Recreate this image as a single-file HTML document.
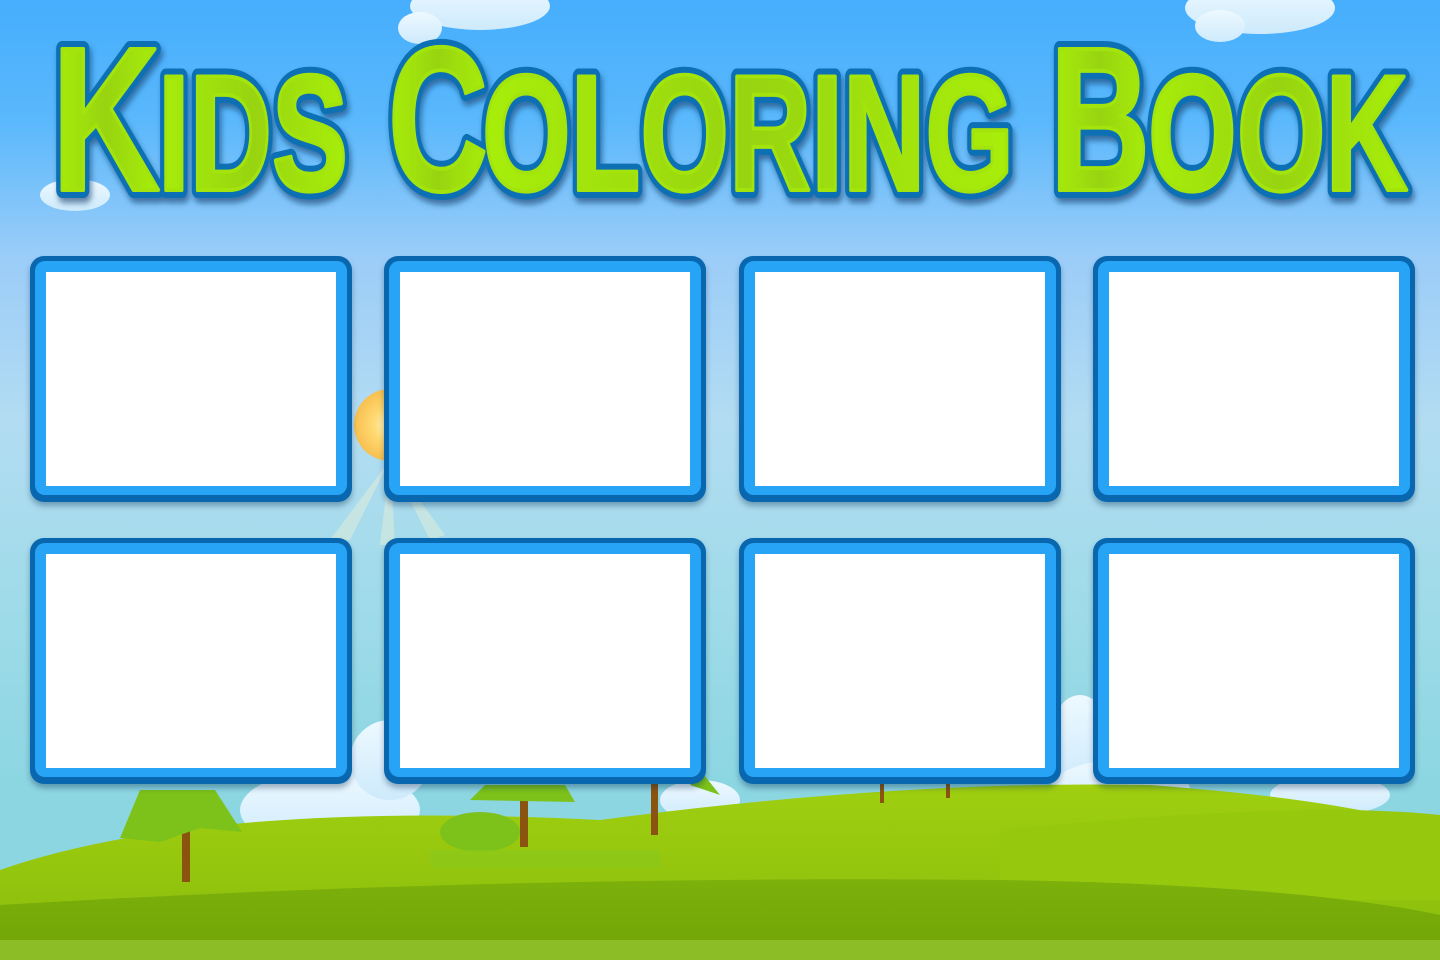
<!DOCTYPE html>
<html><head><meta charset="utf-8"><style>
html,body{margin:0;padding:0}
body{width:1440px;height:960px;overflow:hidden;position:relative;font-family:"Liberation Sans",sans-serif;
background:linear-gradient(180deg,#46aefd 0px,#5ab8fc 120px,#9ccdf8 260px,#b2dcf2 420px,#9edbe8 620px,#8cd6e2 780px)}
.card{position:absolute;width:322px;height:246px;border-radius:14px;background:#0867ae;box-shadow:0 4px 6px rgba(0,40,80,.35)}
.card .l{position:absolute;left:5px;right:5px;top:5px;bottom:7px;border-radius:10px;background:#27a4f6}
.card .w{position:absolute;left:16px;right:16px;top:16px;bottom:16px;background:#fff}
svg{position:absolute;left:0;top:0}
</style></head><body>
<svg width="1440" height="960" viewBox="0 0 1440 960">
<defs>
<radialGradient id="sun" cx="0.5" cy="0.5" r="0.5"><stop offset="0" stop-color="#fff6c0"/><stop offset="0.5" stop-color="#ffd870"/><stop offset="1" stop-color="#f7c050"/></radialGradient>
<linearGradient id="cl" x1="0" y1="0" x2="0" y2="1"><stop offset="0" stop-color="#eef9ff"/><stop offset="1" stop-color="#cdeafc"/></linearGradient>
<linearGradient id="g1" x1="0" y1="0" x2="0" y2="1"><stop offset="0" stop-color="#a0cf10"/><stop offset="1" stop-color="#88bc0c"/></linearGradient>
<linearGradient id="g2" x1="0" y1="0" x2="0" y2="1"><stop offset="0" stop-color="#7cb00a"/><stop offset="1" stop-color="#70a408"/></linearGradient>
<linearGradient id="tg" x1="0" y1="0" x2="1" y2="0"><stop offset="0" stop-color="#a8ee0a"/><stop offset="0.5" stop-color="#98d410"/><stop offset="1" stop-color="#a8ee0a"/></linearGradient>
<filter id="sh"><feDropShadow dx="2" dy="5" stdDeviation="3" flood-color="#0a3a6a" flood-opacity="0.6"/></filter>
</defs>
<circle cx="390" cy="425" r="36" fill="url(#sun)"/>
<g fill="#fff8d0" opacity="0.35"><path d="M390 460 L330 540 L350 540Z"/><path d="M390 460 L380 545 L395 545Z"/><path d="M390 460 L430 540 L445 535Z"/></g>
<g fill="url(#cl)">
<ellipse cx="480" cy="6" rx="70" ry="24"/><ellipse cx="420" cy="28" rx="22" ry="16"/>
<ellipse cx="1260" cy="8" rx="75" ry="26"/><ellipse cx="1220" cy="26" rx="25" ry="16"/>
<ellipse cx="75" cy="195" rx="35" ry="16"/>
<ellipse cx="330" cy="810" rx="90" ry="40"/><ellipse cx="390" cy="760" rx="40" ry="40"/>
<ellipse cx="1080" cy="740" rx="30" ry="45"/><ellipse cx="1120" cy="790" rx="70" ry="30"/>
<ellipse cx="700" cy="800" rx="40" ry="20"/><ellipse cx="1330" cy="795" rx="60" ry="20"/>
</g>
<path d="M0 870 Q200 800 600 820 Q900 780 1150 785 Q1350 800 1440 830 L1440 960 L0 960Z" fill="url(#g1)"/>
<path d="M1000 830 Q1300 800 1440 815 L1440 900 L1000 900Z" fill="#96c80e"/>
<path d="M0 905 Q500 875 1000 880 Q1300 885 1440 915 L1440 960 L0 960Z" fill="url(#g2)"/>
<rect x="0" y="940" width="1440" height="20" fill="#8cbc26"/>
<g fill="#8a5410"><rect x="182" y="820" width="8" height="62"/><rect x="520" y="795" width="8" height="52"/><rect x="651" y="780" width="7" height="55"/><rect x="880" y="783" width="4" height="20"/><rect x="946" y="783" width="4" height="15"/></g>
<g fill="#7cc21a"><path d="M120 838 L140 790 L215 790 L242 832 L200 828 L160 842Z"/><path d="M470 800 L485 785 L565 785 L575 802 Z"/><ellipse cx="480" cy="832" rx="40" ry="20"/><path d="M690 785 L720 795 L700 770Z"/></g>
<g fill="#8cc81a" opacity="0.7"><rect x="430" y="850" width="230" height="18"/></g>
<g font-family="Liberation Sans" font-weight="bold">
<g filter="url(#sh)" fill="#0d70b4" stroke="#0d70b4" stroke-width="16" stroke-linejoin="round">
<text x="52" y="190" font-size="205" textLength="108" lengthAdjust="spacingAndGlyphs">K</text>
<text x="158" y="190" font-size="165" textLength="190" lengthAdjust="spacingAndGlyphs">IDS</text>
<text x="388" y="190" font-size="205" textLength="100" lengthAdjust="spacingAndGlyphs">C</text>
<text x="482" y="190" font-size="165" textLength="532" lengthAdjust="spacingAndGlyphs">OLORING</text>
<text x="1050" y="190" font-size="205" textLength="100" lengthAdjust="spacingAndGlyphs">B</text>
<text x="1148" y="190" font-size="165" textLength="260" lengthAdjust="spacingAndGlyphs">OOK</text>
</g>
<g fill="url(#tg)" stroke="#a2e40c" stroke-width="4" stroke-linejoin="round">
<text x="52" y="190" font-size="205" textLength="108" lengthAdjust="spacingAndGlyphs">K</text>
<text x="158" y="190" font-size="165" textLength="190" lengthAdjust="spacingAndGlyphs">IDS</text>
<text x="388" y="190" font-size="205" textLength="100" lengthAdjust="spacingAndGlyphs">C</text>
<text x="482" y="190" font-size="165" textLength="532" lengthAdjust="spacingAndGlyphs">OLORING</text>
<text x="1050" y="190" font-size="205" textLength="100" lengthAdjust="spacingAndGlyphs">B</text>
<text x="1148" y="190" font-size="165" textLength="260" lengthAdjust="spacingAndGlyphs">OOK</text>
</g>
</g>
</svg>
<div class="card" style="left:30px;top:256px"><div class="l"></div><div class="w"></div></div>
<div class="card" style="left:384px;top:256px"><div class="l"></div><div class="w"></div></div>
<div class="card" style="left:739px;top:256px"><div class="l"></div><div class="w"></div></div>
<div class="card" style="left:1093px;top:256px"><div class="l"></div><div class="w"></div></div>
<div class="card" style="left:30px;top:538px"><div class="l"></div><div class="w"></div></div>
<div class="card" style="left:384px;top:538px"><div class="l"></div><div class="w"></div></div>
<div class="card" style="left:739px;top:538px"><div class="l"></div><div class="w"></div></div>
<div class="card" style="left:1093px;top:538px"><div class="l"></div><div class="w"></div></div>
</body></html>
